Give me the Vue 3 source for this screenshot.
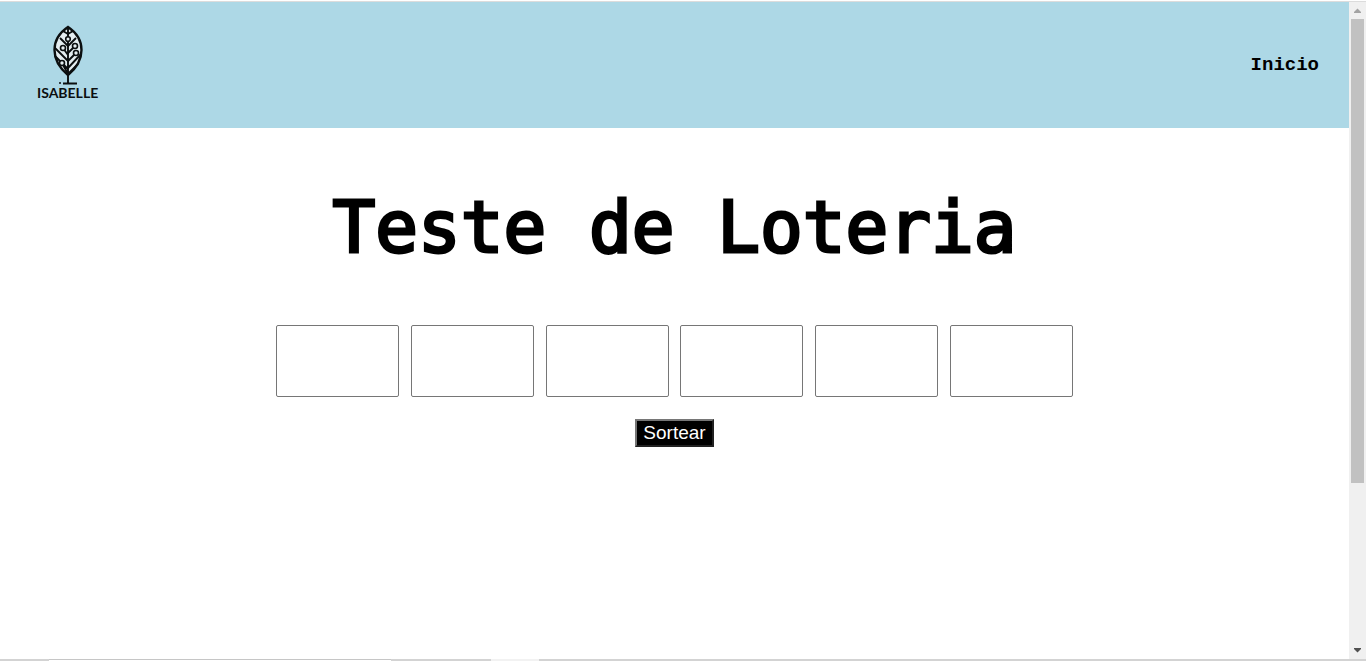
<script setup>
import { ref } from 'vue'

const numbers = ref(['', '', '', '', '', ''])

function draw() {
  const pool = new Set()
  while (pool.size < 6) pool.add(1 + Math.floor(Math.random() * 60))
  numbers.value = [...pool].sort((a, b) => a - b).map(String)
}
</script>

<template>
  <div class="window">
    <div class="viewport">
      <div class="page">
        <header class="topbar">
          <a class="logo" href="#" aria-label="Isabelle">
            <svg class="tree" width="36" height="60" viewBox="0 0 36 60" aria-hidden="true">
              <path d="M18 2C9 8 4.500 15 4.500 25c0 11 5 18 13.500 25 8.500-7 13.500-14 13.500-25C31.500 15 27 8 18 2Z" fill="#e4edf0" stroke="#0b0f10" stroke-width="2.4" />
              <g fill="none" stroke="#0b0f10" stroke-width="1.9">
                <path d="M18 2v56M13 58.500h14M18 9l-5-3M18 9l5-3M18 21l-8-8M18 21l8-8M18 30l-5-7M18 28l7-7M5 23l13 13M18 36l8-8M5 31l13 13M18 43l13-14M12 38l6 11M18 49l10-10" />
              </g>
              <g fill="#e4edf0" stroke="#0b0f10" stroke-width="1.6">
                <circle cx="18" cy="14" r="2.3" />
                <circle cx="13" cy="23" r="2.5" />
                <circle cx="25" cy="21" r="2.5" />
                <circle cx="26" cy="28" r="2.5" />
                <circle cx="12" cy="38" r="2.5" />
              </g>
              <circle cx="10" cy="58" r="1" fill="#0b0f10" />
            </svg>
            <span class="brand">ISABELLE</span>
          </a>
          <nav><a class="link" href="#">Inicio</a></nav>
        </header>
        <main class="content">
          <h1>Teste de Loteria</h1>
          <div class="numbers">
            <input v-for="(n, i) in numbers" :key="i" v-model="numbers[i]" type="text" :aria-label="`Número ${i + 1}`" />
          </div>
          <button class="draw" type="button" @click="draw">Sortear</button>
        </main>
      </div>
      <div class="scrollbar" aria-hidden="true">
        <svg width="17" height="17" viewBox="0 0 17 17"><path d="M5 11h7v-1L8.500 6.500 5 10z" fill="#a3a3a3" /></svg>
        <div class="track"><div class="thumb"></div></div>
        <svg width="17" height="17" viewBox="0 0 17 17"><path d="M5 6h7v1l-3.500 3.500L5 7z" fill="#505050" /></svg>
      </div>
    </div>
    <div class="shelf" aria-hidden="true"><span class="field"></span><span class="tab"></span></div>
  </div>
</template>

<style>
body { margin: 0; background: #fff; }
</style>

<style scoped>
.window {
  box-sizing: border-box;
  min-height: 100vh;
  display: flex;
  flex-direction: column;
  border-top: 1px solid #fff;
  background: #fff;
}
.viewport {
  flex: 1;
  display: flex;
  border-top: 1px solid #dcdcdc;
}
.page { flex: 1; min-width: 0; }
.topbar {
  box-sizing: border-box;
  display: flex;
  justify-content: space-between;
  align-items: center;
  min-height: 126px;
  padding: 0 30px 0 37px;
  background: #add8e6;
}
.logo {
  display: flex;
  flex-direction: column;
  align-items: center;
  padding-bottom: 4px;
  color: #0b0f10;
  text-decoration: none;
}
.tree { display: block; }
.brand {
  font: 700 14px/16px Lato, sans-serif;
}
.link {
  font: 700 19px/24px "Liberation Mono", "Courier New", monospace;
  color: #000;
  text-decoration: none;
}
.content {
  display: flex;
  flex-direction: column;
  align-items: center;
  padding-top: 56px;
}
h1 {
  margin: 0;
  font: 400 71px/88px "DejaVu Sans Mono", monospace;
  color: #000;
  -webkit-text-stroke: 3px #000;
}
.numbers {
  display: flex;
  justify-content: space-between;
  width: 797px;
  max-width: 100%;
  margin-top: 53px;
}
input {
  box-sizing: border-box;
  width: 123px;
  height: 72px;
  padding: 1px 2px;
  border: 1px solid #767676;
  border-radius: 2px;
  background: #fff;
  text-align: center;
  font: 32px "Liberation Sans", Arial, sans-serif;
}
.draw {
  margin-top: 22px;
  padding: 1px 6px;
  border: 2px outset #767676;
  background: #000;
  color: #fff;
  font: 19px/22px "Liberation Sans", Arial, sans-serif;
}
.scrollbar {
  display: flex;
  flex-direction: column;
  width: 17px;
  background: #f0f0f0;
}
.scrollbar svg { display: block; }
.track { flex: 1; padding: 0 2px; }
.thumb { height: 464px; background: #c1c1c1; }
.shelf {
  display: flex;
  height: 2px;
  background: #d3d3d3;
}
.field {
  box-sizing: border-box;
  width: 342px;
  margin: 0 100px 0 49px;
  border-top: 1px solid #c6c6c6;
  background: #fff;
}
.tab { width: 48px; background: #f2f2f2; }
</style>
